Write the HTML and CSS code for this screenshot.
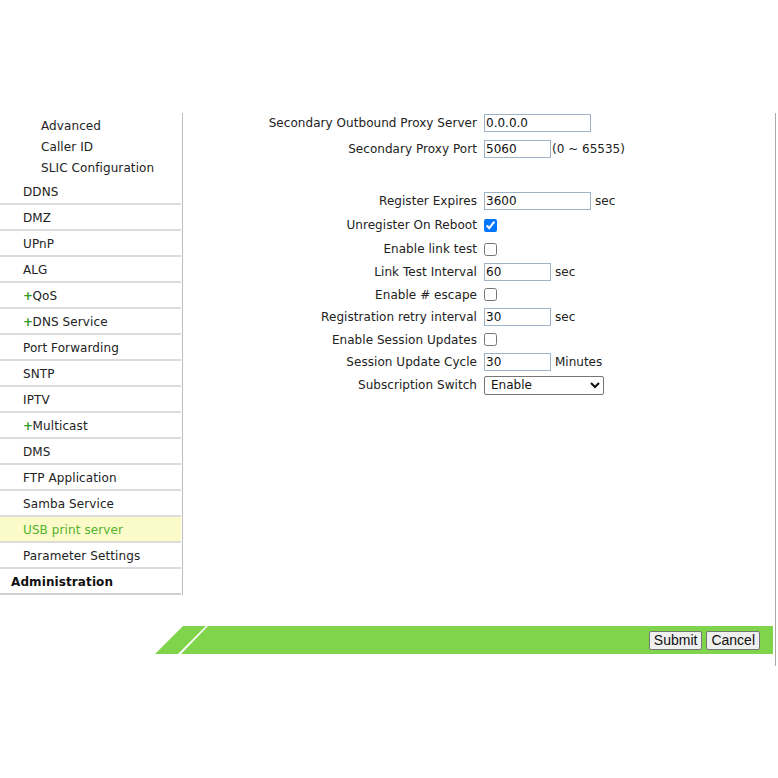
FILE: index.html
```html
<!DOCTYPE html>
<html lang="en">
<head>
<meta charset="utf-8">
<title>Voice - SIP Advanced</title>
<link rel="stylesheet" href="styles.css">
</head>
<body>
<div class="page">
  <div class="main">
    <nav class="sidebar">
      <div class="sub-list">
        <a class="sub-item">Advanced</a>
        <a class="sub-item">Caller ID</a>
        <a class="sub-item">SLIC Configuration</a>
      </div>
      <a class="item">DDNS</a>
      <a class="item">DMZ</a>
      <a class="item">UPnP</a>
      <a class="item">ALG</a>
      <a class="item"><span class="plus">+</span>QoS</a>
      <a class="item"><span class="plus">+</span>DNS Service</a>
      <a class="item">Port Forwarding</a>
      <a class="item">SNTP</a>
      <a class="item">IPTV</a>
      <a class="item"><span class="plus">+</span>Multicast</a>
      <a class="item">DMS</a>
      <a class="item">FTP Application</a>
      <a class="item">Samba Service</a>
      <a class="item active">USB print server</a>
      <a class="item">Parameter Settings</a>
      <a class="item section">Administration</a>
    </nav>

    <form class="settings">
      <label class="lbl">Secondary Outbound Proxy Server</label>
      <div class="field"><input class="txt wide" type="text" value="0.0.0.0"></div>

      <label class="lbl">Secondary Proxy Port</label>
      <div class="field"><input class="txt short" type="text" value="5060"><span class="range">(0 ~ 65535)</span></div>

      <div></div><div></div>

      <label class="lbl">Register Expires</label>
      <div class="field"><input class="txt wide" type="text" value="3600"><span class="unit">sec</span></div>

      <label class="lbl">Unregister On Reboot</label>
      <div class="field"><input class="chk" type="checkbox" checked></div>

      <label class="lbl">Enable link test</label>
      <div class="field"><input class="chk" type="checkbox"></div>

      <label class="lbl">Link Test Interval</label>
      <div class="field"><input class="txt short" type="text" value="60"><span class="unit">sec</span></div>

      <label class="lbl">Enable # escape</label>
      <div class="field"><input class="chk" type="checkbox"></div>

      <label class="lbl">Registration retry interval</label>
      <div class="field"><input class="txt short" type="text" value="30"><span class="unit">sec</span></div>

      <label class="lbl">Enable Session Updates</label>
      <div class="field"><input class="chk" type="checkbox"></div>

      <label class="lbl">Session Update Cycle</label>
      <div class="field"><input class="txt short" type="text" value="30"><span class="unit">Minutes</span></div>

      <label class="lbl">Subscription Switch</label>
      <div class="field">
        <select class="sel">
          <option selected>Enable</option>
          <option>Disable</option>
        </select>
      </div>
    </form>
  </div>

  <div class="footer">
    <div class="bar">
      <div class="bar-tab"></div>
      <div class="bar-main">
        <button class="btn" type="button">Submit</button>
        <button class="btn" type="button">Cancel</button>
      </div>
    </div>
  </div>
</div>
</body>
</html>
```

FILE: styles.css
```css
* {
  box-sizing: border-box;
}

html, body {
  margin: 0;
  padding: 0;
  background: #ffffff;
}

body {
  font-family: "DejaVu Sans", Verdana, sans-serif;
  font-size: 12px;
  color: #222222;
}

.page {
  margin-top: 113px;
  width: 776px;
  border-right: 1px solid #a9a9a9;
}

.main {
  display: flex;
  align-items: flex-start;
}

/* left navigation column */
.sidebar {
  width: 183px;
  flex: none;
  display: flex;
  flex-direction: column;
  border-right: 1px solid #bdbdbd;
  padding-top: 3px;
}

.sub-list {
  display: flex;
  flex-direction: column;
}

.sub-item {
  height: 21px;
  line-height: 21px;
  padding-left: 41px;
  color: #222222;
  letter-spacing: 0.1px;
}

.item {
  height: 26px;
  line-height: 26px;
  padding-left: 23px;
  margin-right: 1px;
  border-bottom: 2px solid #dcdcdc;
  color: #222222;
  letter-spacing: 0.1px;
}

.item.active {
  background: #fbfbc9;
  color: #55b22c;
}

.item.section {
  padding-left: 11px;
  font-weight: bold;
  color: #111111;
  border-bottom-color: #cfcfcf;
}

/* expandable-group marker */
.plus {
  color: #2f9a22;
  font-weight: bold;
  letter-spacing: -0.5px;
}

/* settings form */
.settings {
  flex: 1;
  margin: 0;
  display: grid;
  grid-template-columns: 294px 1fr;
  grid-template-rows: 20px 31px 25px 24px 24px 24px 22px 23px 22px 23px 21px 26px;
  column-gap: 7px;
  align-items: center;
}

.lbl {
  text-align: right;
  white-space: nowrap;
  color: #222222;
  letter-spacing: 0.05px;
}

.field {
  display: flex;
  align-items: center;
  white-space: nowrap;
}

.txt {
  height: 18px;
  margin: 0;
  padding: 0 1px;
  border: 1px solid #9fb3c6;
  font-family: "DejaVu Sans", Verdana, sans-serif;
  font-size: 12px;
  color: #111111;
  background: #ffffff;
}

.txt.wide {
  width: 107px;
}

.txt.short {
  width: 67px;
}

.range {
  margin-left: 1px;
}

.unit {
  margin-left: 4px;
}

.chk {
  width: 13px;
  height: 13px;
  margin: 0;
  accent-color: #0075ff;
}

.sel {
  width: 120px;
  height: 19px;
  margin: 0;
  padding: 0 0 0 2px;
  font-family: "DejaVu Sans", Verdana, sans-serif;
  font-size: 12px;
  color: #111111;
  border: 1px solid #767676;
  border-radius: 2px;
  background: #ffffff;
}

/* bottom action bar */
.footer {
  padding: 31px 2px 12px 155px;
}

.bar {
  display: flex;
  height: 28px;
}

.bar-tab {
  width: 51px;
  flex: none;
  background: #80d44b;
  clip-path: polygon(28px 0, 51px 0, 23px 100%, 0 100%);
}

.bar-main {
  flex: 1;
  margin-left: -25px;
  background: #80d44b;
  clip-path: polygon(27px 0, 100% 0, 100% 100%, 0 100%);
  display: flex;
  align-items: center;
  justify-content: flex-end;
  gap: 4px;
  padding-right: 13px;
}

.btn {
  height: 19px;
  margin: 0;
  padding: 0 4px;
  font-family: "Liberation Sans", Arial, sans-serif;
  font-size: 14px;
  line-height: 15px;
  color: #111111;
  background: #efefef;
  border: 1px solid #767676;
  border-radius: 2px;
}
```
